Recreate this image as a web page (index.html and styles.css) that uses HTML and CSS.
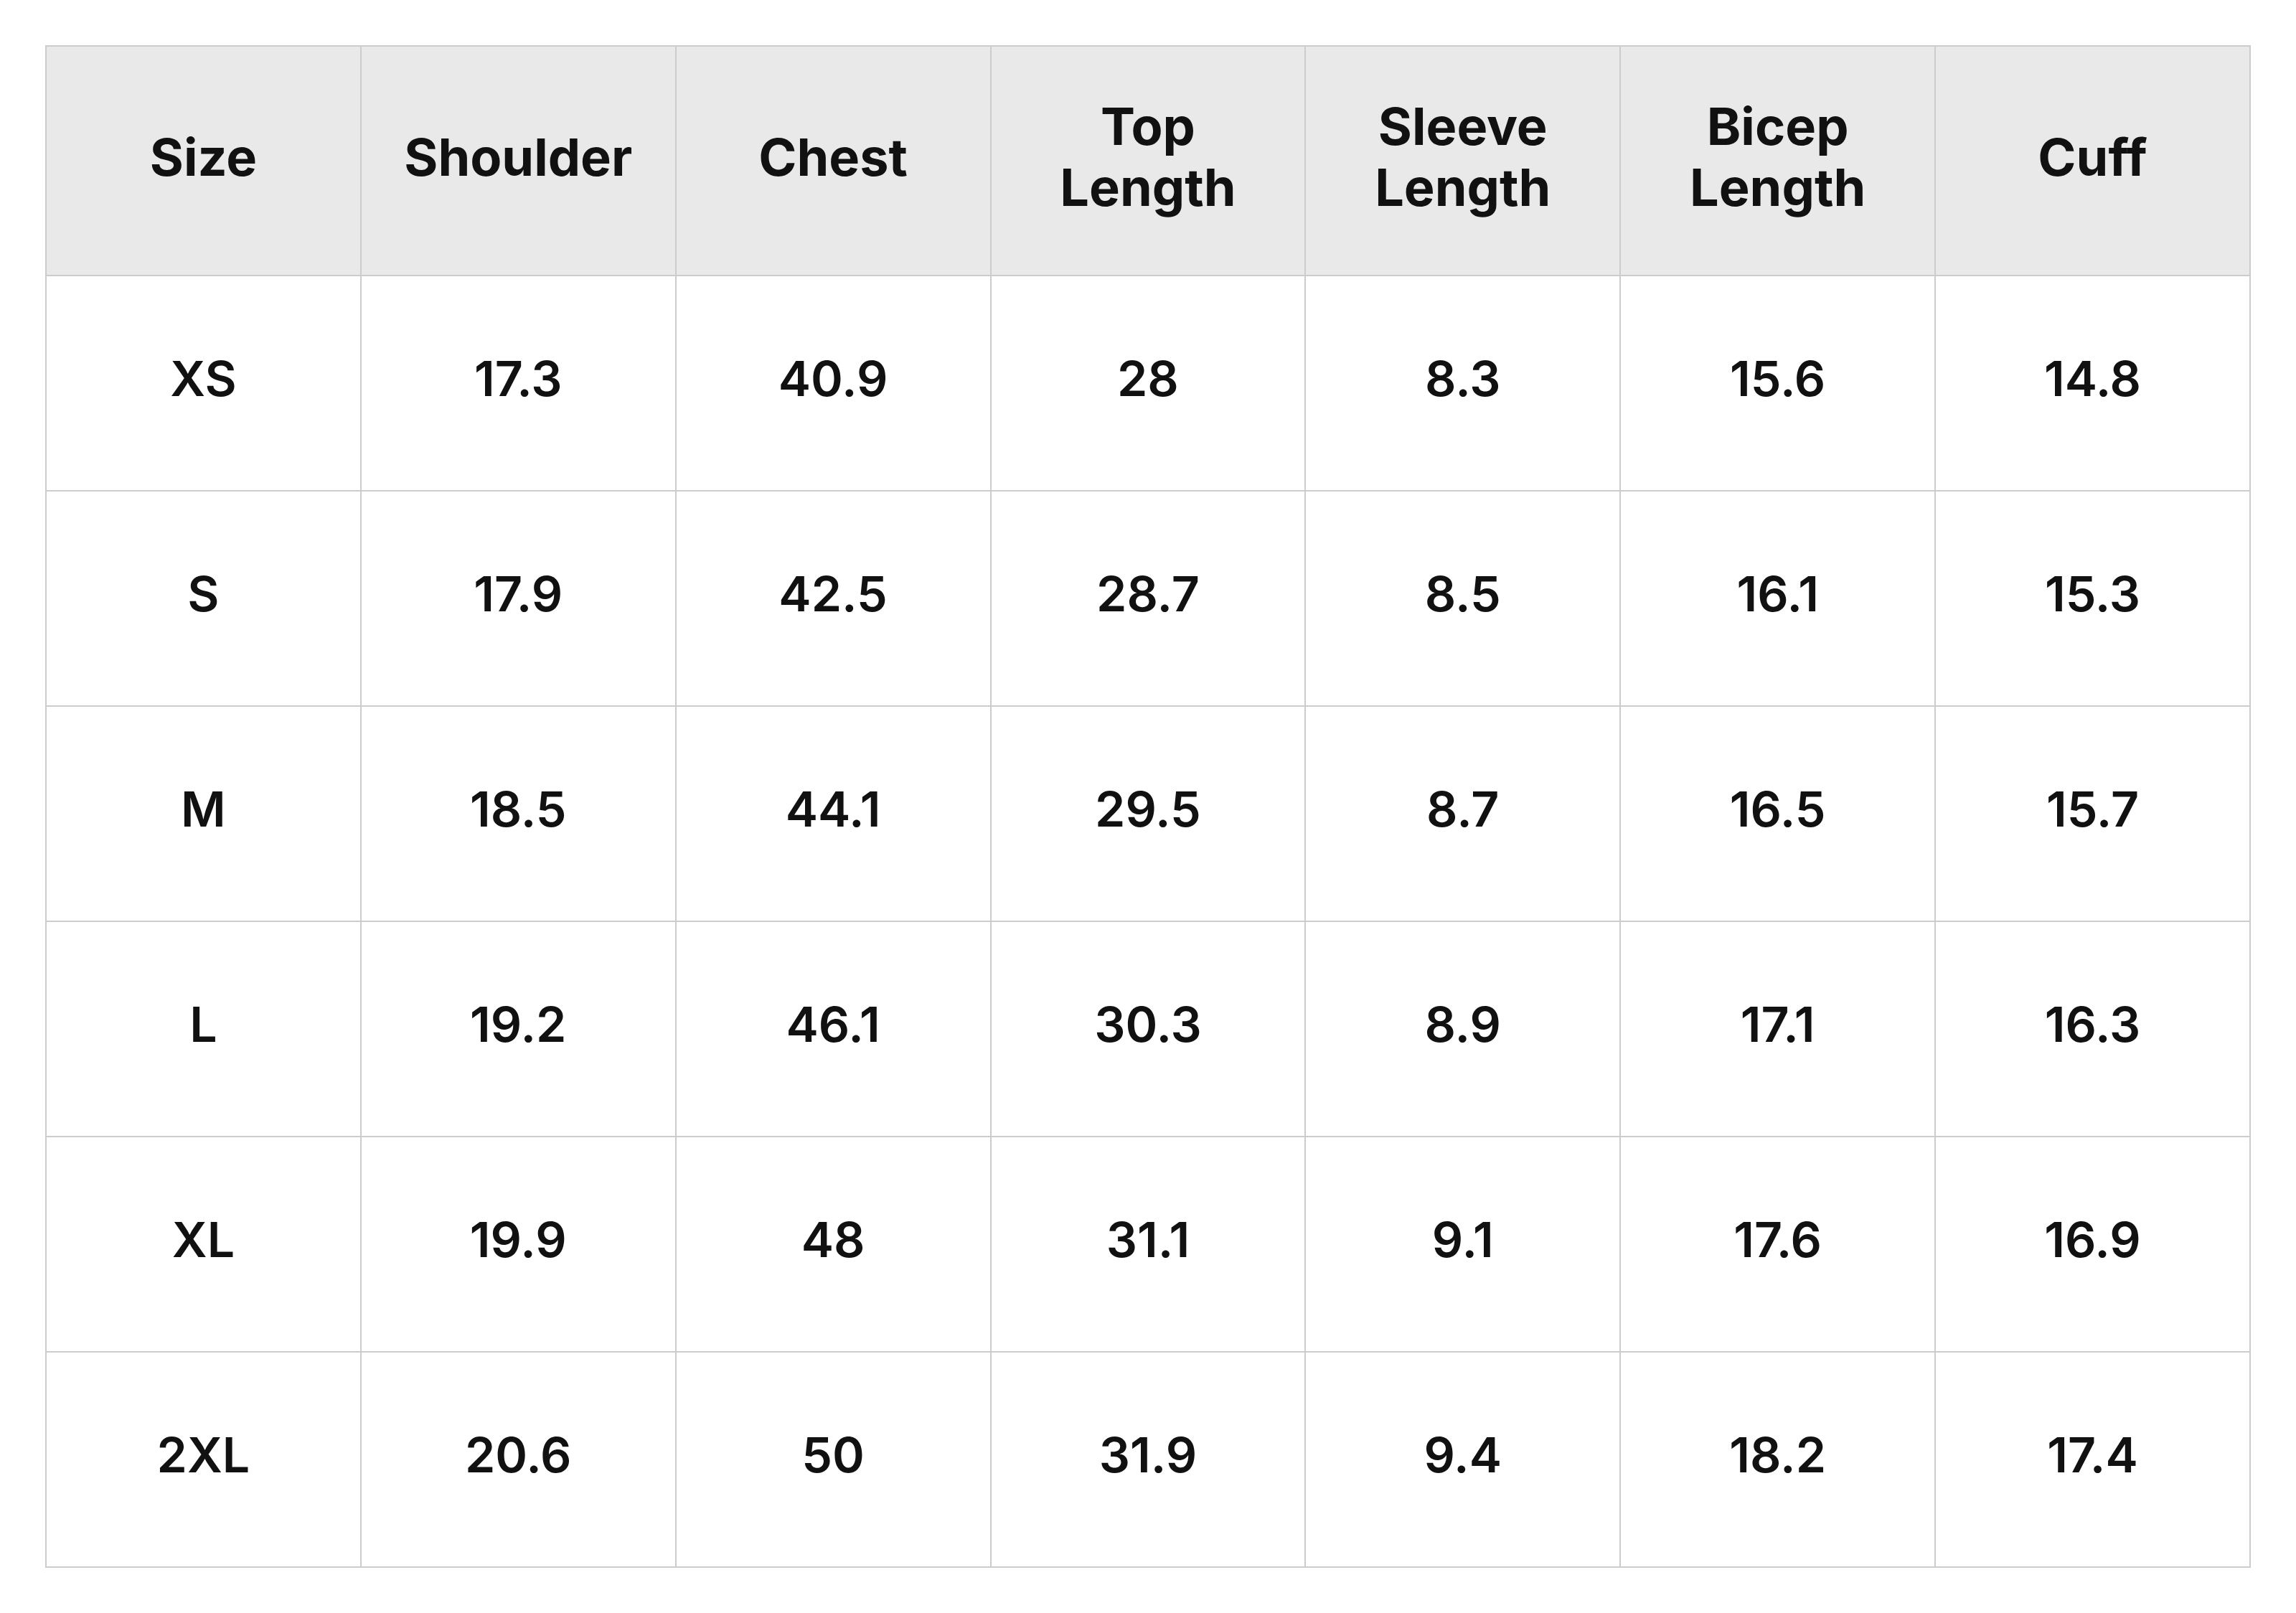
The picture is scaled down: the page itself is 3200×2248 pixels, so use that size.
FILE: index.html
```html
<!DOCTYPE html>
<html lang="en">
<head>
<meta charset="utf-8">
<title>Size Chart</title>
<link rel="stylesheet" href="styles.css">
</head>
<body>
<main class="page">
  <table class="size-table">
    <thead>
      <tr>
        <th>Size</th>
        <th>Shoulder</th>
        <th>Chest</th>
        <th>Top<br>Length</th>
        <th>Sleeve<br>Length</th>
        <th>Bicep<br>Length</th>
        <th>Cuff</th>
      </tr>
    </thead>
    <tbody>
      <tr><td>XS</td><td>17.3</td><td>40.9</td><td>28</td><td>8.3</td><td>15.6</td><td>14.8</td></tr>
      <tr><td>S</td><td>17.9</td><td>42.5</td><td>28.7</td><td>8.5</td><td>16.1</td><td>15.3</td></tr>
      <tr><td>M</td><td>18.5</td><td>44.1</td><td>29.5</td><td>8.7</td><td>16.5</td><td>15.7</td></tr>
      <tr><td>L</td><td>19.2</td><td>46.1</td><td>30.3</td><td>8.9</td><td>17.1</td><td>16.3</td></tr>
      <tr><td>XL</td><td>19.9</td><td>48</td><td>31.1</td><td>9.1</td><td>17.6</td><td>16.9</td></tr>
      <tr><td>2XL</td><td>20.6</td><td>50</td><td>31.9</td><td>9.4</td><td>18.2</td><td>17.4</td></tr>
    </tbody>
  </table>
</main>
</body>
</html>
```

FILE: styles.css
```css
html, body {
  margin: 0;
  padding: 0;
  background: #ffffff;
}

.page {
  padding: 63px 63px;
  font-family: Inter, "Liberation Sans", Arial, sans-serif;
  color: #111111;
}

.size-table {
  width: 100%;
  border-collapse: collapse;
  table-layout: fixed;
}

.size-table th,
.size-table td {
  border: 2px solid #cccccc;
  text-align: center;
  vertical-align: middle;
  padding: 0 0 12px 0;
}

.size-table th {
  background: #e9e9e9;
  height: 306px;
  font-size: 72px;
  font-weight: 700;
  line-height: 85px;
}

.size-table td {
  height: 286px;
  font-size: 68px;
  font-weight: 600;
  line-height: 1.2;
}
```
